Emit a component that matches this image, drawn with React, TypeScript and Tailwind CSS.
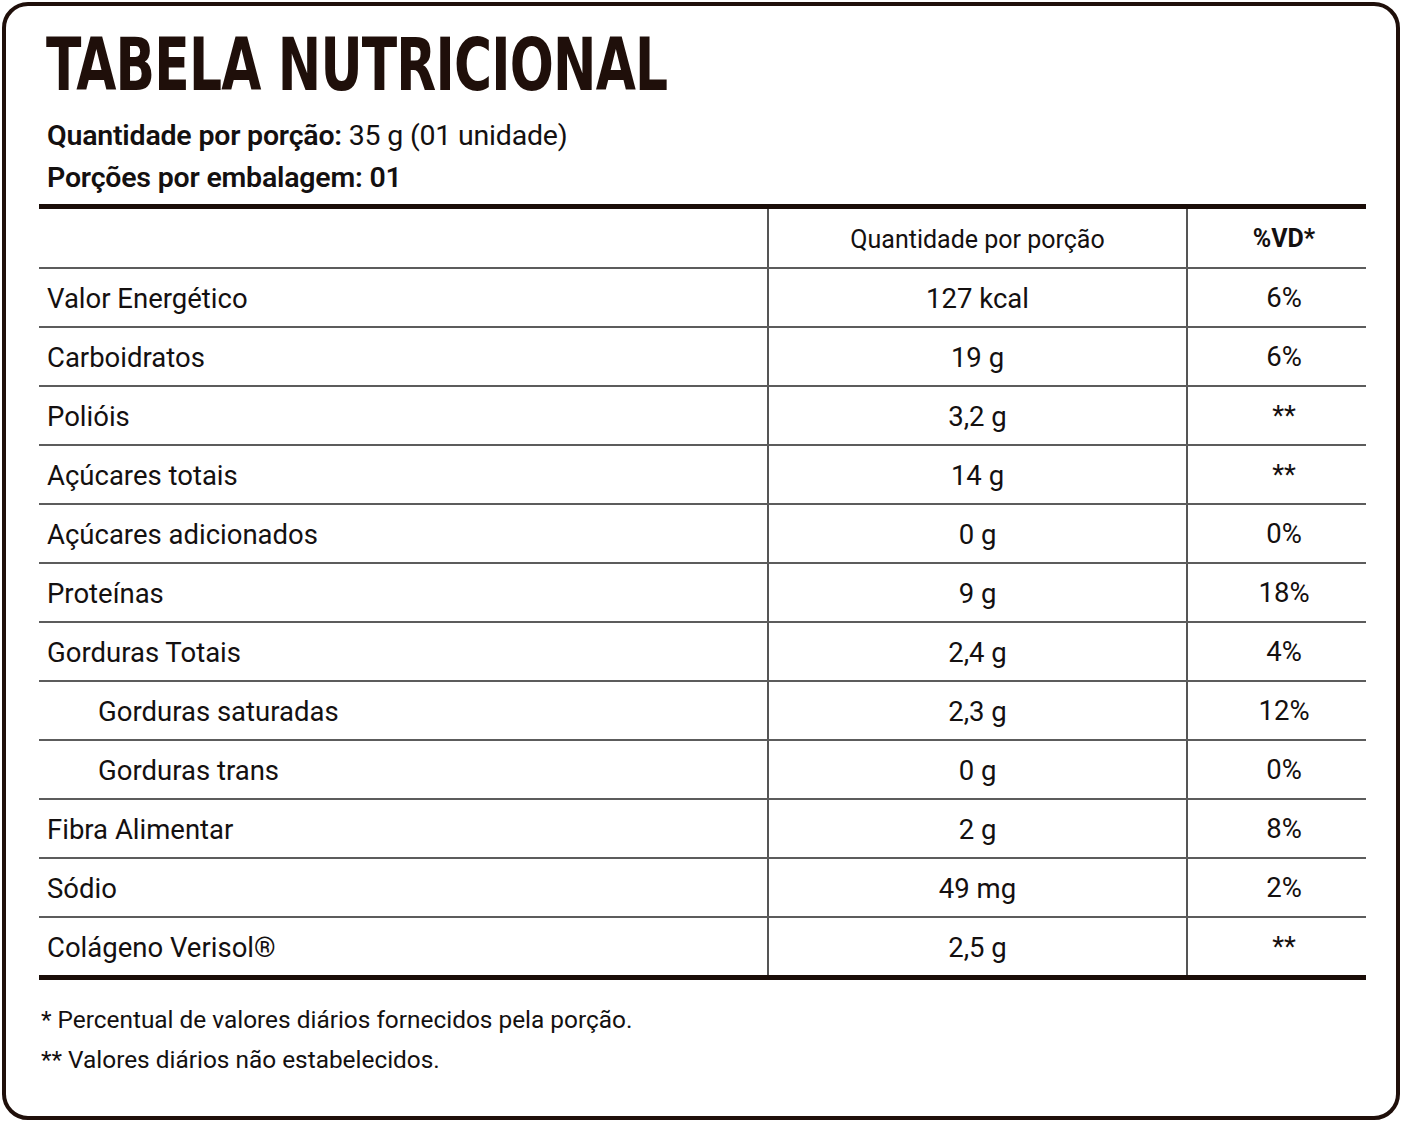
const rows: { name: string; qty: string; vd: string; indent?: boolean }[] = [
  { name: 'Valor Energético', qty: '127 kcal', vd: '6%' },
  { name: 'Carboidratos', qty: '19 g', vd: '6%' },
  { name: 'Polióis', qty: '3,2 g', vd: '**' },
  { name: 'Açúcares totais', qty: '14 g', vd: '**' },
  { name: 'Açúcares adicionados', qty: '0 g', vd: '0%' },
  { name: 'Proteínas', qty: '9 g', vd: '18%' },
  { name: 'Gorduras Totais', qty: '2,4 g', vd: '4%' },
  { name: 'Gorduras saturadas', qty: '2,3 g', vd: '12%', indent: true },
  { name: 'Gorduras trans', qty: '0 g', vd: '0%', indent: true },
  { name: 'Fibra Alimentar', qty: '2 g', vd: '8%' },
  { name: 'Sódio', qty: '49 mg', vd: '2%' },
  { name: 'Colágeno Verisol®', qty: '2,5 g', vd: '**' },
];

const body = "font-['Roboto','Liberation_Sans',sans-serif]";

export default function App() {
  return (
    <div className={`w-[1402px] h-[1122px] bg-white p-[2px] text-[#141010] ${body}`}>
      <div className="h-full border-[4px] border-[#1f0f0a] rounded-[26px] pl-[33px] pr-[30px] pt-[21px]">
        {/* cabeçalho */}
        <h1 className="font-['DejaVu_Sans_Condensed',sans-serif] font-bold text-[73px] leading-[76px] text-[#1f0f0a] pl-[7px] tracking-[-1px] whitespace-nowrap">
          <span className="inline-block origin-left scale-x-[0.79]">TABELA NUTRICIONAL</span>
        </h1>
        <div className="pl-[8px] mt-[12px] text-[28.5px] leading-[42px] tracking-[-0.2px]">
          <p>
            <span className="font-semibold">Quantidade por porção:</span> 35 g (01 unidade)
          </p>
          <p className="font-semibold">Porções por embalagem: 01</p>
        </div>

        {/* tabela */}
        <div className="mt-[5px] border-t-[5px] border-b-[5px] border-[#1a0d08]">
          <div className="grid grid-cols-[728px_419px_178px] h-[58px]">
            <div />
            <div className="border-l-[2px] border-[#555] flex items-center justify-center pt-[4px] text-[25px]">
              Quantidade por porção
            </div>
            <div className="border-l-[2px] border-[#555] flex items-center justify-center pl-[16px] pt-[2px] text-[25px] font-bold">
              %VD*
            </div>
          </div>
          {rows.map((r) => (
            <div
              key={r.name}
              className="grid grid-cols-[728px_419px_178px] h-[59px] border-t-[2px] border-[#5c5c5c] text-[27.5px]"
            >
              <div className={`flex items-center pt-[2px] ${r.indent ? 'pl-[59px]' : 'pl-[8px]'}`}>{r.name}</div>
              <div className="border-l-[2px] border-[#555] flex items-center justify-center pt-[2px]">{r.qty}</div>
              <div className="border-l-[2px] border-[#555] flex items-center justify-center pl-[16px]">{r.vd}</div>
            </div>
          ))}
        </div>

        {/* notas */}
        <div className="mt-[20px] pl-[2px] text-[24.4px] leading-[40px]">
          <p>* Percentual de valores diários fornecidos pela porção.</p>
          <p>** Valores diários não estabelecidos.</p>
        </div>
      </div>
    </div>
  );
}
